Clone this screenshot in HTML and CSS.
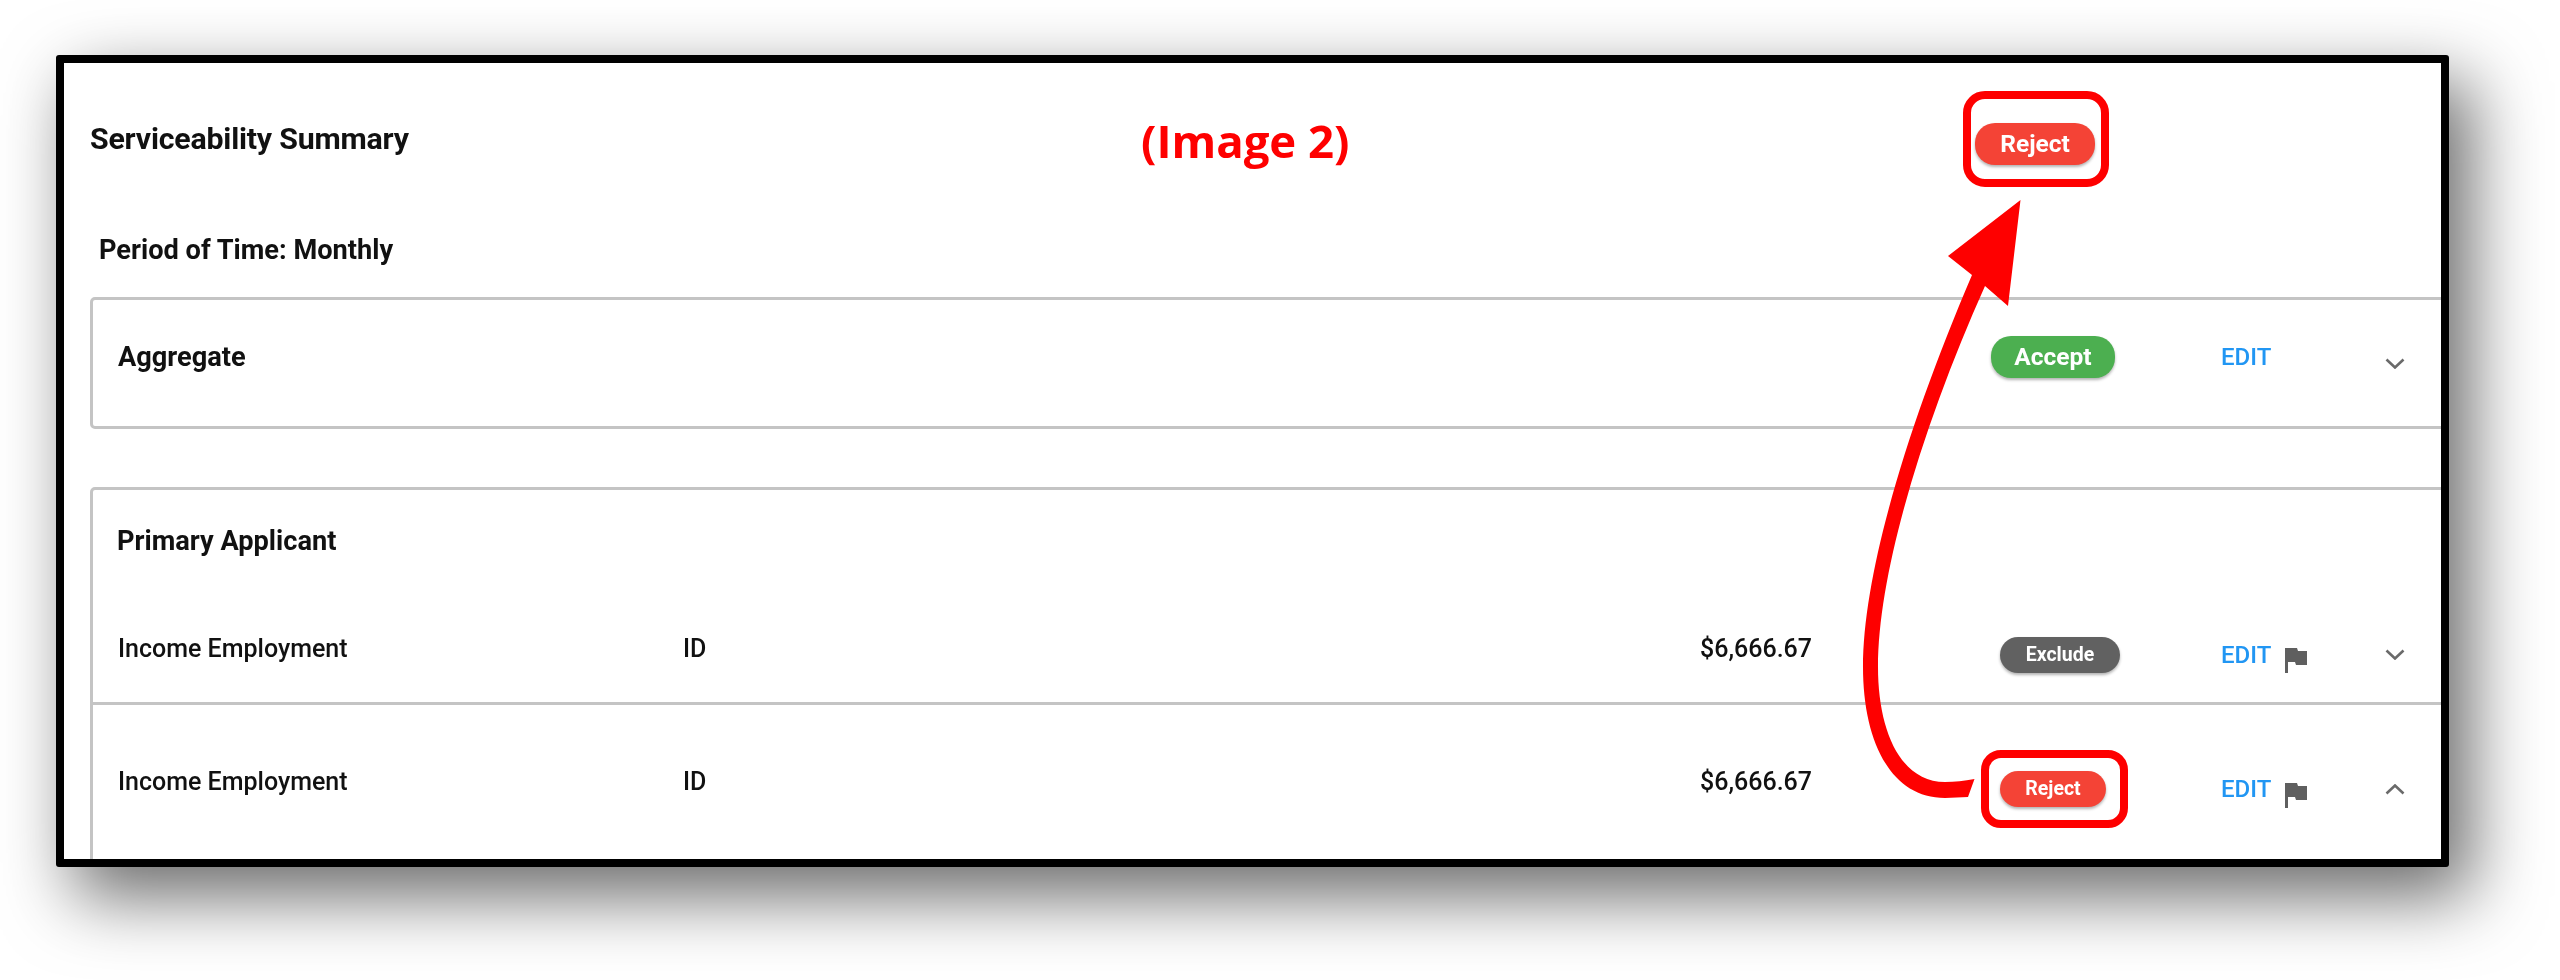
FILE: index.html

```html
<!DOCTYPE html>
<html lang="en">
  <head>
    <meta charset="UTF-8" />
    <title>Serviceability Summary</title>
    <link rel="stylesheet" href="styles.css">
  </head>
  <body>
    <div class="frame">
      <div class="page">
        <div class="header">
          <h2>Serviceability Summary</h2>
          <div class="note">(Image 2)</div>
          <span class="chip chip-big chip-top red">Reject</span>
        </div>
        <div class="period">Period of Time: Monthly</div>

        <div class="card card-aggregate">
          <div class="row row-aggregate">
            <div class="card-title">Aggregate</div>
            <div></div>
            <div></div>
            <div><span class="chip chip-big green">Accept</span></div>
            <div class="edit-cell"><a class="edit">EDIT</a></div>
            <svg class="chevron chevron-low" viewBox="0 0 20 11"><path d="M1.5 1.5 10 9.5 18.5 1.5" /></svg>
          </div>
        </div>

        <div class="card card-applicant">
          <div class="card-title applicant-title">Primary Applicant</div>
          <div class="row row-income row-first">
            <div class="cell">Income Employment</div>
            <div class="cell">ID</div>
            <div class="cell">$6,666.67</div>
            <div><span class="chip grey">Exclude</span></div>
            <div class="edit-cell">
              <a class="edit">EDIT</a>
              <svg class="flag" viewBox="0 0 22 25"><path d="M0 0H12L13 3H22V17H11L10 14H3V25H0Z" /></svg>
            </div>
            <svg class="chevron" viewBox="0 0 20 11"><path d="M1.5 1.5 10 9.5 18.5 1.5" /></svg>
          </div>
          <div class="row row-income row-open">
            <div class="cell">Income Employment</div>
            <div class="cell">ID</div>
            <div class="cell">$6,666.67</div>
            <div><span class="chip red">Reject</span></div>
            <div class="edit-cell">
              <a class="edit">EDIT</a>
              <svg class="flag" viewBox="0 0 22 25"><path d="M0 0H12L13 3H22V17H11L10 14H3V25H0Z" /></svg>
            </div>
            <svg class="chevron" viewBox="0 0 20 11"><path d="M1.5 9.5 10 1.5 18.5 9.5" /></svg>
          </div>
        </div>
      </div>
    </div>

    <!-- callout drawn over the screenshot -->
    <svg class="callout" viewBox="0 0 2560 980">
      <rect x="1967" y="95" width="138" height="88" rx="18" />
      <rect x="1985" y="754" width="139" height="70" rx="16" />
      <path class="arrow" d="M2020.5 200 1948 256 1972 275C1910 420 1863 570 1863 667 1863 740 1890 798 1945 798L1968 797 1974.5 779C1964 781 1955 782 1945 782 1900 782 1878 730 1878 667 1878 570 1925 420 1985 286L2008 306Z" />
    </svg>
  </body>
</html>
```

FILE: styles.css

```css
body {
  margin: 0;
  background: #fff;
  font-family: Roboto, "Liberation Sans", sans-serif;
  height: 980px;
  overflow: hidden;
}

.frame {
  box-sizing: border-box;
  width: 2393px;
  height: 812px;
  margin: 55px 0 0 56px;
  border: 8px solid #000;
  border-radius: 3px;
  background: #fff;
  box-shadow: 20px 28px 70px 2px rgba(0, 0, 0, 0.58);
  overflow: hidden;
}

.page {
  width: 2377px;
  filter: blur(0.6px);
  color: #111;
}

.header {
  display: flex;
  align-items: center;
  height: 150px;
  padding-left: 26px;
}
.header h2 {
  margin: 0;
  width: 1051px;
  font-size: 30.3px;
  font-weight: 700;
  letter-spacing: -0.2px;
}
.note {
  width: 834px;
  margin-top: 3px;
  font-family: "Open Sans", sans-serif;
  font-size: 45.5px;
  font-weight: 700;
  color: #fe0000;
}
.header .chip-top {
  width: 120px;
  margin-top: 11px;
}

.period {
  padding: 22px 0 0 35px;
  font-size: 27.2px;
  font-weight: 700;
  line-height: 30px;
}

.card {
  margin: 32px -60px 0 26px;
  border: 3px solid #c4c4c4;
  border-radius: 5px;
}
.card-aggregate {
  height: 126px;
}
.card-applicant {
  margin-top: 58px;
  height: 500px;
}
.card-title {
  font-size: 27.2px;
  font-weight: 700;
}
.applicant-title {
  padding: 36px 0 47px 24px;
  line-height: 30px;
}

.row {
  display: grid;
  grid-template-columns: 565px 1017px 300px 221px 164px 20px;
  align-items: center;
  padding-left: 25px;
  font-size: 25px;
  font-weight: 500;
}
.row-aggregate {
  height: 114px;
}
.row-first {
  height: 95px;
  padding-top: 4px;
}
.row-first .cell {
  margin-bottom: 12px;
}
.row-open {
  height: 168px;
  border-top: 3px solid #c4c4c4;
}
.row-open .cell {
  margin-bottom: 16px;
}

.chip {
  display: block;
  box-sizing: border-box;
  width: fit-content;
  min-width: 106px;
  height: 36px;
  padding: 0 22px;
  border-radius: 20px;
  color: #fff;
  font-size: 19.5px;
  font-weight: 700;
  line-height: 36px;
  text-align: center;
  box-shadow: 0 2px 3px rgba(0, 0, 0, 0.3);
}
.chip-big {
  height: 42px;
  font-size: 24.5px;
  line-height: 42px;
}
.red {
  background: #f44336;
}
.green {
  background: #4caf50;
  min-width: 124px;
  margin-left: -9px;
}
.grey {
  background: #616161;
  width: 120px;
}

.edit-cell {
  display: flex;
  align-items: center;
}
.edit {
  width: 64px;
  color: #2196f3;
  font-size: 24px;
  font-weight: 500;
}
.flag {
  width: 22px;
  height: 25px;
  margin-top: 12px;
  fill: #5f5f5f;
}
.chevron {
  width: 20px;
  height: 11px;
  fill: none;
  stroke: #6a6a6a;
  stroke-width: 2.6;
}
.chevron-low {
  margin-top: 12px;
}

.callout {
  position: absolute;
  left: 0;
  top: 0;
  width: 2560px;
  height: 980px;
  fill: none;
  stroke: #fe0000;
  stroke-width: 8;
}
.callout .arrow {
  fill: #fe0000;
  stroke: none;
}
```
